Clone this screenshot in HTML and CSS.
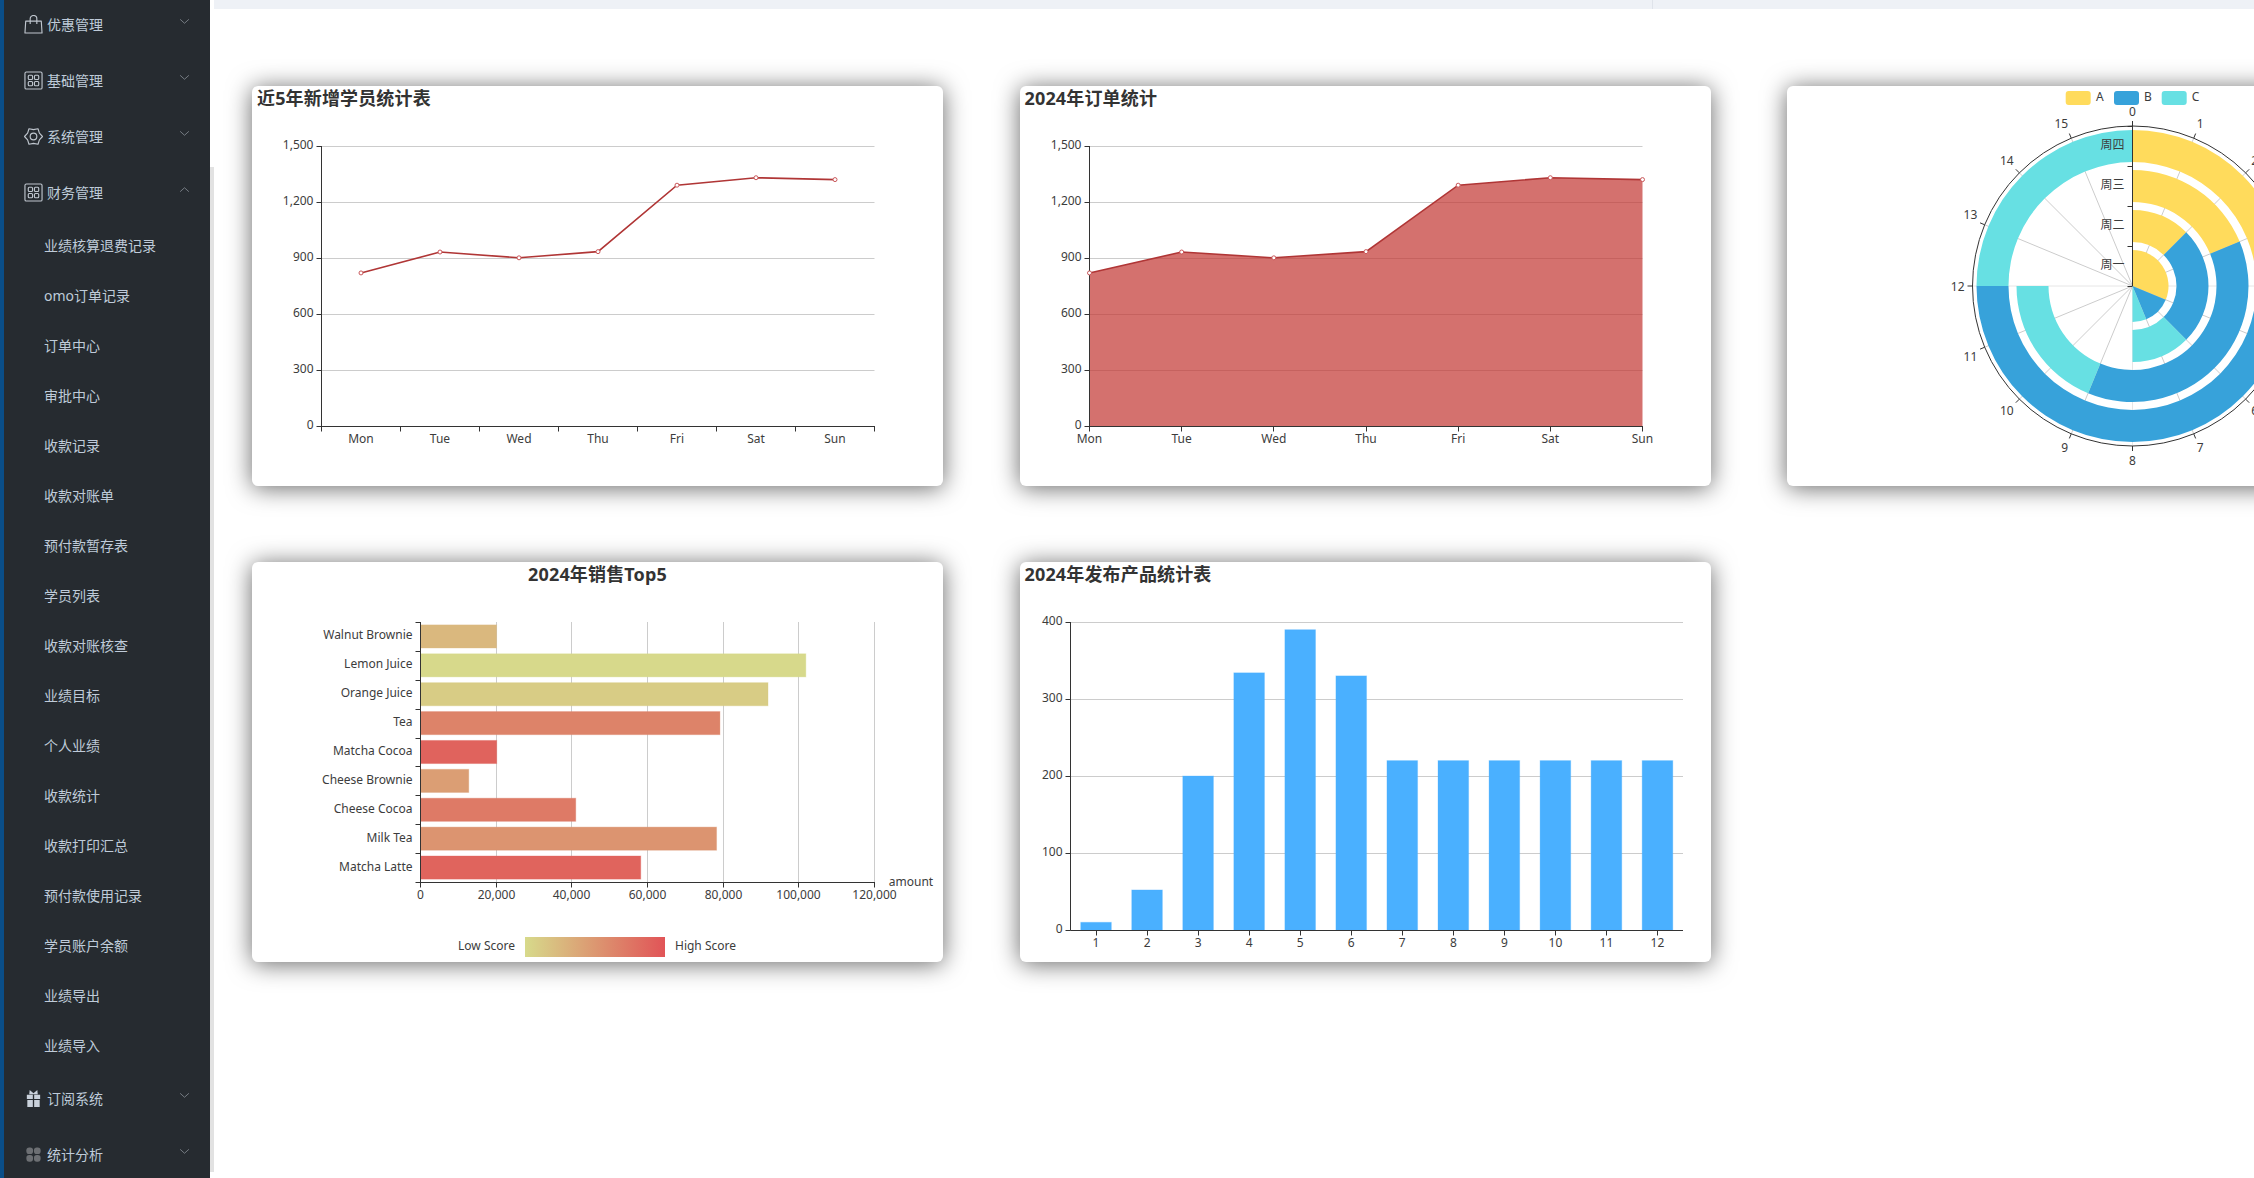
FILE: index.html
```html
<!DOCTYPE html>
<html lang="zh-CN">
<head>
    <meta charset="UTF-8">
    <meta name="viewport" content="width=device-width, initial-scale=1.0">
    <title>统计分析</title>
    <link rel="stylesheet" href="styles.css">
</head>
<body>
    <aside class="sidebar">
        <div class="menu-item">
            <svg class="menu-icon" viewBox="0 0 20 20"><path d="M1 19 L1.8 6.5 H18.2 L19 19 Z M6.5 9.5 V4 a3.5 3.5 0 0 1 7 0 V9.5"/></svg>
            <span class="menu-label">优惠管理</span>
            <svg class="menu-arrow" viewBox="0 0 12 8"><path d="M1 1.5 L6 6 L11 1.5"/></svg>
        </div>
        <div class="menu-item">
            <svg class="menu-icon" viewBox="0 0 20 20"><rect x="1" y="1" width="18" height="18" rx="1.5"/><rect x="4.5" y="4.5" width="4.5" height="4.5" rx="1"/><rect x="11" y="4.5" width="4.5" height="4.5" rx="1"/><rect x="4.5" y="11" width="4.5" height="4.5" rx="1"/><rect x="11" y="11" width="4.5" height="4.5" rx="1"/></svg>
            <span class="menu-label">基础管理</span>
            <svg class="menu-arrow" viewBox="0 0 12 8"><path d="M1 1.5 L6 6 L11 1.5"/></svg>
        </div>
        <div class="menu-item">
            <svg class="menu-icon" viewBox="0 0 20 20"><path d="M19.5 10 L16.2 6.4 L14.75 1.8 L10 2.8 L5.25 1.8 L3.8 6.4 L.5 10 L3.8 13.6 L5.25 18.2 L10 17.2 L14.75 18.2 L16.2 13.6 Z"/><circle cx="10" cy="10" r="3.5"/></svg>
            <span class="menu-label">系统管理</span>
            <svg class="menu-arrow" viewBox="0 0 12 8"><path d="M1 1.5 L6 6 L11 1.5"/></svg>
        </div>
        <div class="menu-item">
            <svg class="menu-icon" viewBox="0 0 20 20"><rect x="1" y="1" width="18" height="18" rx="1.5"/><rect x="4.5" y="4.5" width="4.5" height="4.5" rx="1"/><rect x="11" y="4.5" width="4.5" height="4.5" rx="1"/><rect x="4.5" y="11" width="4.5" height="4.5" rx="1"/><rect x="11" y="11" width="4.5" height="4.5" rx="1"/></svg>
            <span class="menu-label">财务管理</span>
            <svg class="menu-arrow" viewBox="0 0 12 8"><path d="M1 6.5 L6 2 L11 6.5"/></svg>
        </div>

        <ul class="submenu">
            <li>业绩核算退费记录</li>
            <li>omo订单记录</li>
            <li>订单中心</li>
            <li>审批中心</li>
            <li>收款记录</li>
            <li>收款对账单</li>
            <li>预付款暂存表</li>
            <li>学员列表</li>
            <li>收款对账核查</li>
            <li>业绩目标</li>
            <li>个人业绩</li>
            <li>收款统计</li>
            <li>收款打印汇总</li>
            <li>预付款使用记录</li>
            <li>学员账户余额</li>
            <li>业绩导出</li>
            <li>业绩导入</li>
        </ul>

        <div class="menu-item">
            <svg class="menu-icon icon-gift" viewBox="0 0 20 20"><path d="M6 1 L10 4.5 L14 1 L14.5 5.5 H5.5 Z M3 6 H9.3 V10.5 H3 Z M10.7 6 H17 V10.5 H10.7 Z M3.5 11.5 H9.3 V19 H3.5 Z M10.7 11.5 H16.5 V19 H10.7 Z"/></svg>
            <span class="menu-label">订阅系统</span>
            <svg class="menu-arrow" viewBox="0 0 12 8"><path d="M1 1.5 L6 6 L11 1.5"/></svg>
        </div>
        <div class="menu-item">
            <svg class="menu-icon icon-clover" viewBox="0 0 20 20"><rect x="2.5" y="2.5" width="7" height="7" rx="3"/><rect x="10.5" y="2.5" width="7" height="7" rx="3"/><rect x="2.5" y="10.5" width="7" height="7" rx="3"/><rect x="10.5" y="10.5" width="7" height="7" rx="3"/></svg>
            <span class="menu-label">统计分析</span>
            <svg class="menu-arrow" viewBox="0 0 12 8"><path d="M1 1.5 L6 6 L11 1.5"/></svg>
        </div>
    </aside>

    <div class="rail"></div>

    <main class="main">
        <div class="topbar"><div class="topbar-left"></div></div>

        <div class="charts">
            <section class="card">
                <h2 class="card-title">近5年新增学员统计表</h2>
                <svg class="chart" id="studentChart" viewBox="0 26 691 374"></svg>
            </section>
            <section class="card">
                <h2 class="card-title">2024年订单统计</h2>
                <svg class="chart" id="orderChart" viewBox="0 26 691 374"></svg>
            </section>
            <section class="card">
                <svg class="chart chart-full" id="polarChart" viewBox="0 0 691 400"></svg>
            </section>
            <section class="card">
                <h2 class="card-title card-title-center">2024年销售Top5</h2>
                <svg class="chart" id="salesChart" viewBox="0 26 691 374"></svg>
            </section>
            <section class="card">
                <h2 class="card-title">2024年发布产品统计表</h2>
                <svg class="chart" id="productChart" viewBox="0 26 691 374"></svg>
            </section>
        </div>
    </main>

    <script src="charts.js"></script>
</body>
</html>
```

FILE: styles.css
```css
* {
    box-sizing: border-box;
}

html, body {
    height: 100%;
}

body {
    font-family: "Noto Sans", "Noto Sans CJK SC", sans-serif;
    margin: 0;
    background-color: #fff;
    display: flex;
    overflow: hidden;
}

.sidebar {
    width: 210px;
    flex-shrink: 0;
    height: 100%;
    overflow: hidden;
    background-color: #262b30;
    border-left: 4px solid #0a4e88;
    color: #bfcbd9;
    font-size: 14px;
}

.menu-item {
    display: flex;
    align-items: center;
    height: 56px;
    padding-left: 20px;
    padding-right: 20px;
    padding-bottom: 3px;
}

.sidebar > .menu-item:first-child {
    margin-top: -3px;
}

.menu-icon {
    width: 19px;
    height: 19px;
    margin-top: 2px;
    margin-right: 4px;
    fill: none;
    stroke: #bfc6ce;
    stroke-width: 1.2;
    stroke-linejoin: round;
}

.icon-gift {
    fill: #c9d1db;
    stroke: none;
}

.icon-clover {
    fill: #6c6f73;
    stroke: none;
}

.menu-label {
    flex: 1;
}

.menu-arrow {
    width: 11px;
    height: 7px;
    margin-top: -4px;
    fill: none;
    stroke: #7f868d;
    stroke-width: 1;
}

.submenu {
    list-style: none;
    margin: 0;
    padding: 0;
}

.submenu li {
    height: 50px;
    line-height: 50px;
    padding-left: 40px;
}

.rail {
    width: 4px;
    flex-shrink: 0;
    margin-top: 167px;
    margin-bottom: 6px;
    background-color: #e2e2e2;
}

.main {
    flex: 1;
    min-width: 0;
    overflow: hidden;
}

.topbar {
    height: 9px;
    background-color: #eef1f6;
}

.topbar-left {
    width: 1439px;
    height: 100%;
    border-right: 1px solid #dfe3ea;
}

.charts {
    display: grid;
    grid-template-columns: repeat(3, 691px);
    column-gap: 76.5px;
    row-gap: 76px;
    padding-top: 77px;
    padding-left: 38px;
}

.card {
    height: 400px;
    background-color: #fff;
    border-radius: 6px;
    box-shadow: 0 2px 24px rgba(0, 0, 0, 0.6);
    overflow: hidden;
}

.card-title {
    margin: 0;
    height: 26px;
    line-height: 25px;
    padding-left: 5px;
    font-size: 18px;
    font-weight: bold;
    letter-spacing: 0.15px;
    color: #333;
}

.card-title-center {
    text-align: center;
    padding-left: 0;
}

.chart {
    display: block;
    width: 691px;
    height: 374px;
}

.chart-full {
    height: 400px;
}

.chart text {
    font-size: 12px;
    fill: #3c3c3c;
}
```

FILE: charts.js
```js
const SVG_NS = 'http://www.w3.org/2000/svg';
const AXIS_COLOR = '#333';
const GRID_COLOR = '#ccc';

function add(svg, tag, attrs, text) {
    const el = document.createElementNS(SVG_NS, tag);
    for (const key in attrs) {
        el.setAttribute(key, attrs[key]);
    }
    if (text !== undefined) {
        el.textContent = text;
    }
    svg.appendChild(el);
    return el;
}

function line(svg, x1, y1, x2, y2, color) {
    add(svg, 'line', { x1, y1, x2, y2, stroke: color || AXIS_COLOR, 'stroke-width': 1 });
}

function label(svg, x, y, text, anchor) {
    add(svg, 'text', { x, y, 'text-anchor': anchor || 'middle', 'dominant-baseline': 'central' }, text);
}

function formatNumber(n) {
    return n.toLocaleString('en-US');
}

// value axis with grid lines
function valueAxis(svg, grid, max, step) {
    for (let v = 0; v <= max; v += step) {
        const y = Math.round(grid.bottom - v * (grid.bottom - grid.top) / max) + 0.5;
        if (v > 0) {
            line(svg, grid.left, y, grid.right, y, GRID_COLOR);
        }
        line(svg, grid.left - 5, y, grid.left, y);
        label(svg, grid.left - 8, y - 2, formatNumber(v), 'end');
    }
}

function axisLines(svg, grid) {
    line(svg, grid.left, grid.top, grid.left, grid.bottom + 0.5);
    line(svg, grid.left, grid.bottom + 0.5, grid.right, grid.bottom + 0.5);
}

const days = ['Mon', 'Tue', 'Wed', 'Thu', 'Fri', 'Sat', 'Sun'];
const dayValues = [820, 932, 901, 934, 1290, 1330, 1320];

function drawLineChart(id, boundaryGap, area) {
    const svg = document.getElementById(id);
    const grid = { left: 69.5, right: 622.5, top: 60, bottom: 340 };
    const width = grid.right - grid.left;
    const band = boundaryGap ? width / days.length : width / (days.length - 1);
    const xOf = (i) => grid.left + band * i + (boundaryGap ? band / 2 : 0);
    const yOf = (v) => grid.bottom - v * (grid.bottom - grid.top) / 1500;
    const points = dayValues.map((v, i) => `${xOf(i)},${yOf(v)}`);

    valueAxis(svg, grid, 1500, 300);

    if (area) {
        add(svg, 'polygon', {
            points: `${grid.left},${grid.bottom} ${points.join(' ')} ${grid.right},${grid.bottom}`,
            fill: '#c23531',
            'fill-opacity': 0.7
        });
    }

    axisLines(svg, grid);

    const ticks = boundaryGap ? days.length : days.length - 1;
    for (let i = 0; i <= ticks; i++) {
        const x = Math.round(grid.left + band * i - 0.5) + 0.5;
        line(svg, x, grid.bottom, x, grid.bottom + 5.5);
    }
    days.forEach((day, i) => label(svg, xOf(i), grid.bottom + 12.5, day));

    add(svg, 'polyline', { points: points.join(' '), fill: 'none', stroke: '#b03636', 'stroke-width': 1.6 });
    dayValues.forEach((v, i) => {
        add(svg, 'circle', { cx: xOf(i), cy: yOf(v), r: 2, fill: '#fff', stroke: '#c9575a', 'stroke-width': 1 });
    });
}

function point(cx, cy, r, deg) {
    const rad = deg * Math.PI / 180;
    return [cx + r * Math.sin(rad), cy - r * Math.cos(rad)];
}

function sector(cx, cy, r0, r1, a0, a1) {
    const large = a1 - a0 > 180 ? 1 : 0;
    const p0 = point(cx, cy, r1, a0);
    const p1 = point(cx, cy, r1, a1);
    const p2 = point(cx, cy, r0, a1);
    const p3 = point(cx, cy, r0, a0);
    return `M${p0} A${r1} ${r1} 0 ${large} 1 ${p1} L${p2} A${r0} ${r0} 0 ${large} 0 ${p3} Z`;
}

// angle label sits on the edge facing the centre, so it grows outwards
function angleLabel(svg, cx, cy, radius, deg, text) {
    const p = point(cx, cy, radius, deg);
    const dx = p[0] - cx;
    const dy = p[1] - cy;
    let anchor = 'middle';
    if (Math.abs(dx) > 1) {
        anchor = dx > 0 ? 'start' : 'end';
    }
    let shift = 0;
    if (Math.abs(dy) > 1) {
        shift = dy > 0 ? 6 : -7;
    }
    label(svg, p[0], p[1] + shift, text, anchor);
}

function drawPolarChart() {
    const svg = document.getElementById('polarChart');
    const cx = 345.5;
    const cy = 200;
    const radius = 160;
    const colors = ['#ffdb5c', '#37a2da', '#67e0e3'];

    // legend
    [['A', 278.7, 309], ['B', 327, 357], ['C', 374.7, 404.7]].forEach((item, i) => {
        add(svg, 'rect', { x: item[1], y: 5, width: 25, height: 14, rx: 3, fill: colors[i] });
        label(svg, item[2], 10.5, item[0], 'start');
    });

    for (let i = 0; i < 16; i++) {
        const end = point(cx, cy, radius, i * 22.5);
        line(svg, cx, cy, end[0], end[1], i % 4 === 0 ? '#e6e6e6' : GRID_COLOR);
    }

    const rings = [
        { r0: 0, r1: 36, values: [5, 2, 1] },
        { r0: 44, r1: 76, values: [2, 4, 2] },
        { r0: 84, r1: 116, values: [3, 6, 3] },
        { r0: 124, r1: 156, values: [4, 8, 4] }
    ];
    rings.forEach((ring) => {
        let start = 0;
        ring.values.forEach((value, i) => {
            const end = start + value * 22.5;
            add(svg, 'path', { d: sector(cx, cy, ring.r0, ring.r1, start, end), fill: colors[i] });
            start = end;
        });
    });

    add(svg, 'circle', { cx, cy, r: radius, fill: 'none', stroke: AXIS_COLOR, 'stroke-width': 1 });
    for (let i = 0; i < 16; i++) {
        const deg = i * 22.5;
        const a = point(cx, cy, radius, deg);
        const b = point(cx, cy, radius + 5, deg);
        line(svg, a[0], a[1], b[0], b[1]);
        angleLabel(svg, cx, cy, radius + 8, deg, i);
    }

    line(svg, cx, cy, cx, cy - radius);
    for (let r = 0; r <= radius; r += 40) {
        line(svg, cx - 5, cy - r + 0.5, cx, cy - r + 0.5);
    }
    ['周一', '周二', '周三', '周四'].forEach((day, i) => {
        label(svg, cx - 8, cy - 21.5 - i * 40, day, 'end');
    });
}

function drawSalesChart() {
    const svg = document.getElementById('salesChart');
    const grid = { left: 168.5, right: 622.5, top: 60, bottom: 320 };
    const rows = [
        [89.3, 58212, 'Matcha Latte'],
        [57.1, 78254, 'Milk Tea'],
        [74.4, 41032, 'Cheese Cocoa'],
        [50.1, 12755, 'Cheese Brownie'],
        [89.7, 20145, 'Matcha Cocoa'],
        [68.1, 79146, 'Tea'],
        [19.6, 91852, 'Orange Juice'],
        [10.6, 101852, 'Lemon Juice'],
        [32.7, 20112, 'Walnut Brownie']
    ];
    const width = grid.right - grid.left;
    const band = (grid.bottom - grid.top) / rows.length;
    const barHeight = band * 0.8;

    for (let v = 0; v <= 120000; v += 20000) {
        const x = Math.round(grid.left + v * width / 120000 - 0.5) + 0.5;
        if (v > 0) {
            line(svg, x, grid.top, x, grid.bottom, GRID_COLOR);
        }
        line(svg, x, grid.bottom, x, grid.bottom + 5.5);
        label(svg, x, grid.bottom + 12, formatNumber(v));
    }

    rows.forEach((row, i) => {
        const t = (row[0] - 10) / 90;
        const mix = (a, b) => Math.round(a + (b - a) * t);
        const color = `rgb(${mix(215, 225)},${mix(218, 84)},${mix(139, 87)})`;
        const top = grid.bottom - band * (i + 1);
        add(svg, 'rect', {
            x: grid.left,
            y: top + (band - barHeight) / 2,
            width: row[1] * width / 120000,
            height: barHeight,
            fill: color,
            stroke: color,
            'stroke-opacity': 0.35
        });
        label(svg, grid.left - 8, top + band / 2 - 1.5, row[2], 'end');
    });

    for (let i = 0; i <= rows.length; i++) {
        const y = Math.round(grid.top + band * i) + 0.5;
        line(svg, grid.left - 5, y, grid.left, y);
    }
    axisLines(svg, grid);
    label(svg, 636.8, 319, 'amount', 'start');

    // gradient legend
    const defs = add(svg, 'defs', {});
    const gradient = add(defs, 'linearGradient', { id: 'scoreGradient' });
    add(gradient, 'stop', { offset: '0', 'stop-color': '#d7da8b' });
    add(gradient, 'stop', { offset: '1', 'stop-color': '#e15457' });
    add(svg, 'rect', { x: 273, y: 375, width: 140, height: 20, fill: 'url(#scoreGradient)' });
    label(svg, 263, 383.5, 'Low Score', 'end');
    label(svg, 423, 383.5, 'High Score', 'start');
}

function drawProductChart() {
    const svg = document.getElementById('productChart');
    const grid = { left: 50.5, right: 663, top: 60, bottom: 368 };
    const values = [10, 52, 200, 334, 390, 330, 220, 220, 220, 220, 220, 220];
    const band = (grid.right - grid.left) / values.length;
    const barWidth = band * 0.6;
    const height = grid.bottom - grid.top;

    valueAxis(svg, grid, 400, 100);

    values.forEach((value, i) => {
        const center = grid.left + band * (i + 0.5);
        const barHeight = value * height / 400;
        add(svg, 'rect', {
            x: center - barWidth / 2,
            y: grid.bottom - barHeight,
            width: barWidth,
            height: barHeight,
            fill: '#4ab0ff',
            stroke: '#4ab0ff',
            'stroke-opacity': 0.3
        });
        const x = Math.round(center - 0.5) + 0.5;
        line(svg, x, grid.bottom, x, grid.bottom + 5.5);
        label(svg, center, grid.bottom + 12.5, i + 1);
    });

    axisLines(svg, grid);
}

drawLineChart('studentChart', true, false);
drawLineChart('orderChart', false, true);
drawPolarChart();
drawSalesChart();
drawProductChart();
```
